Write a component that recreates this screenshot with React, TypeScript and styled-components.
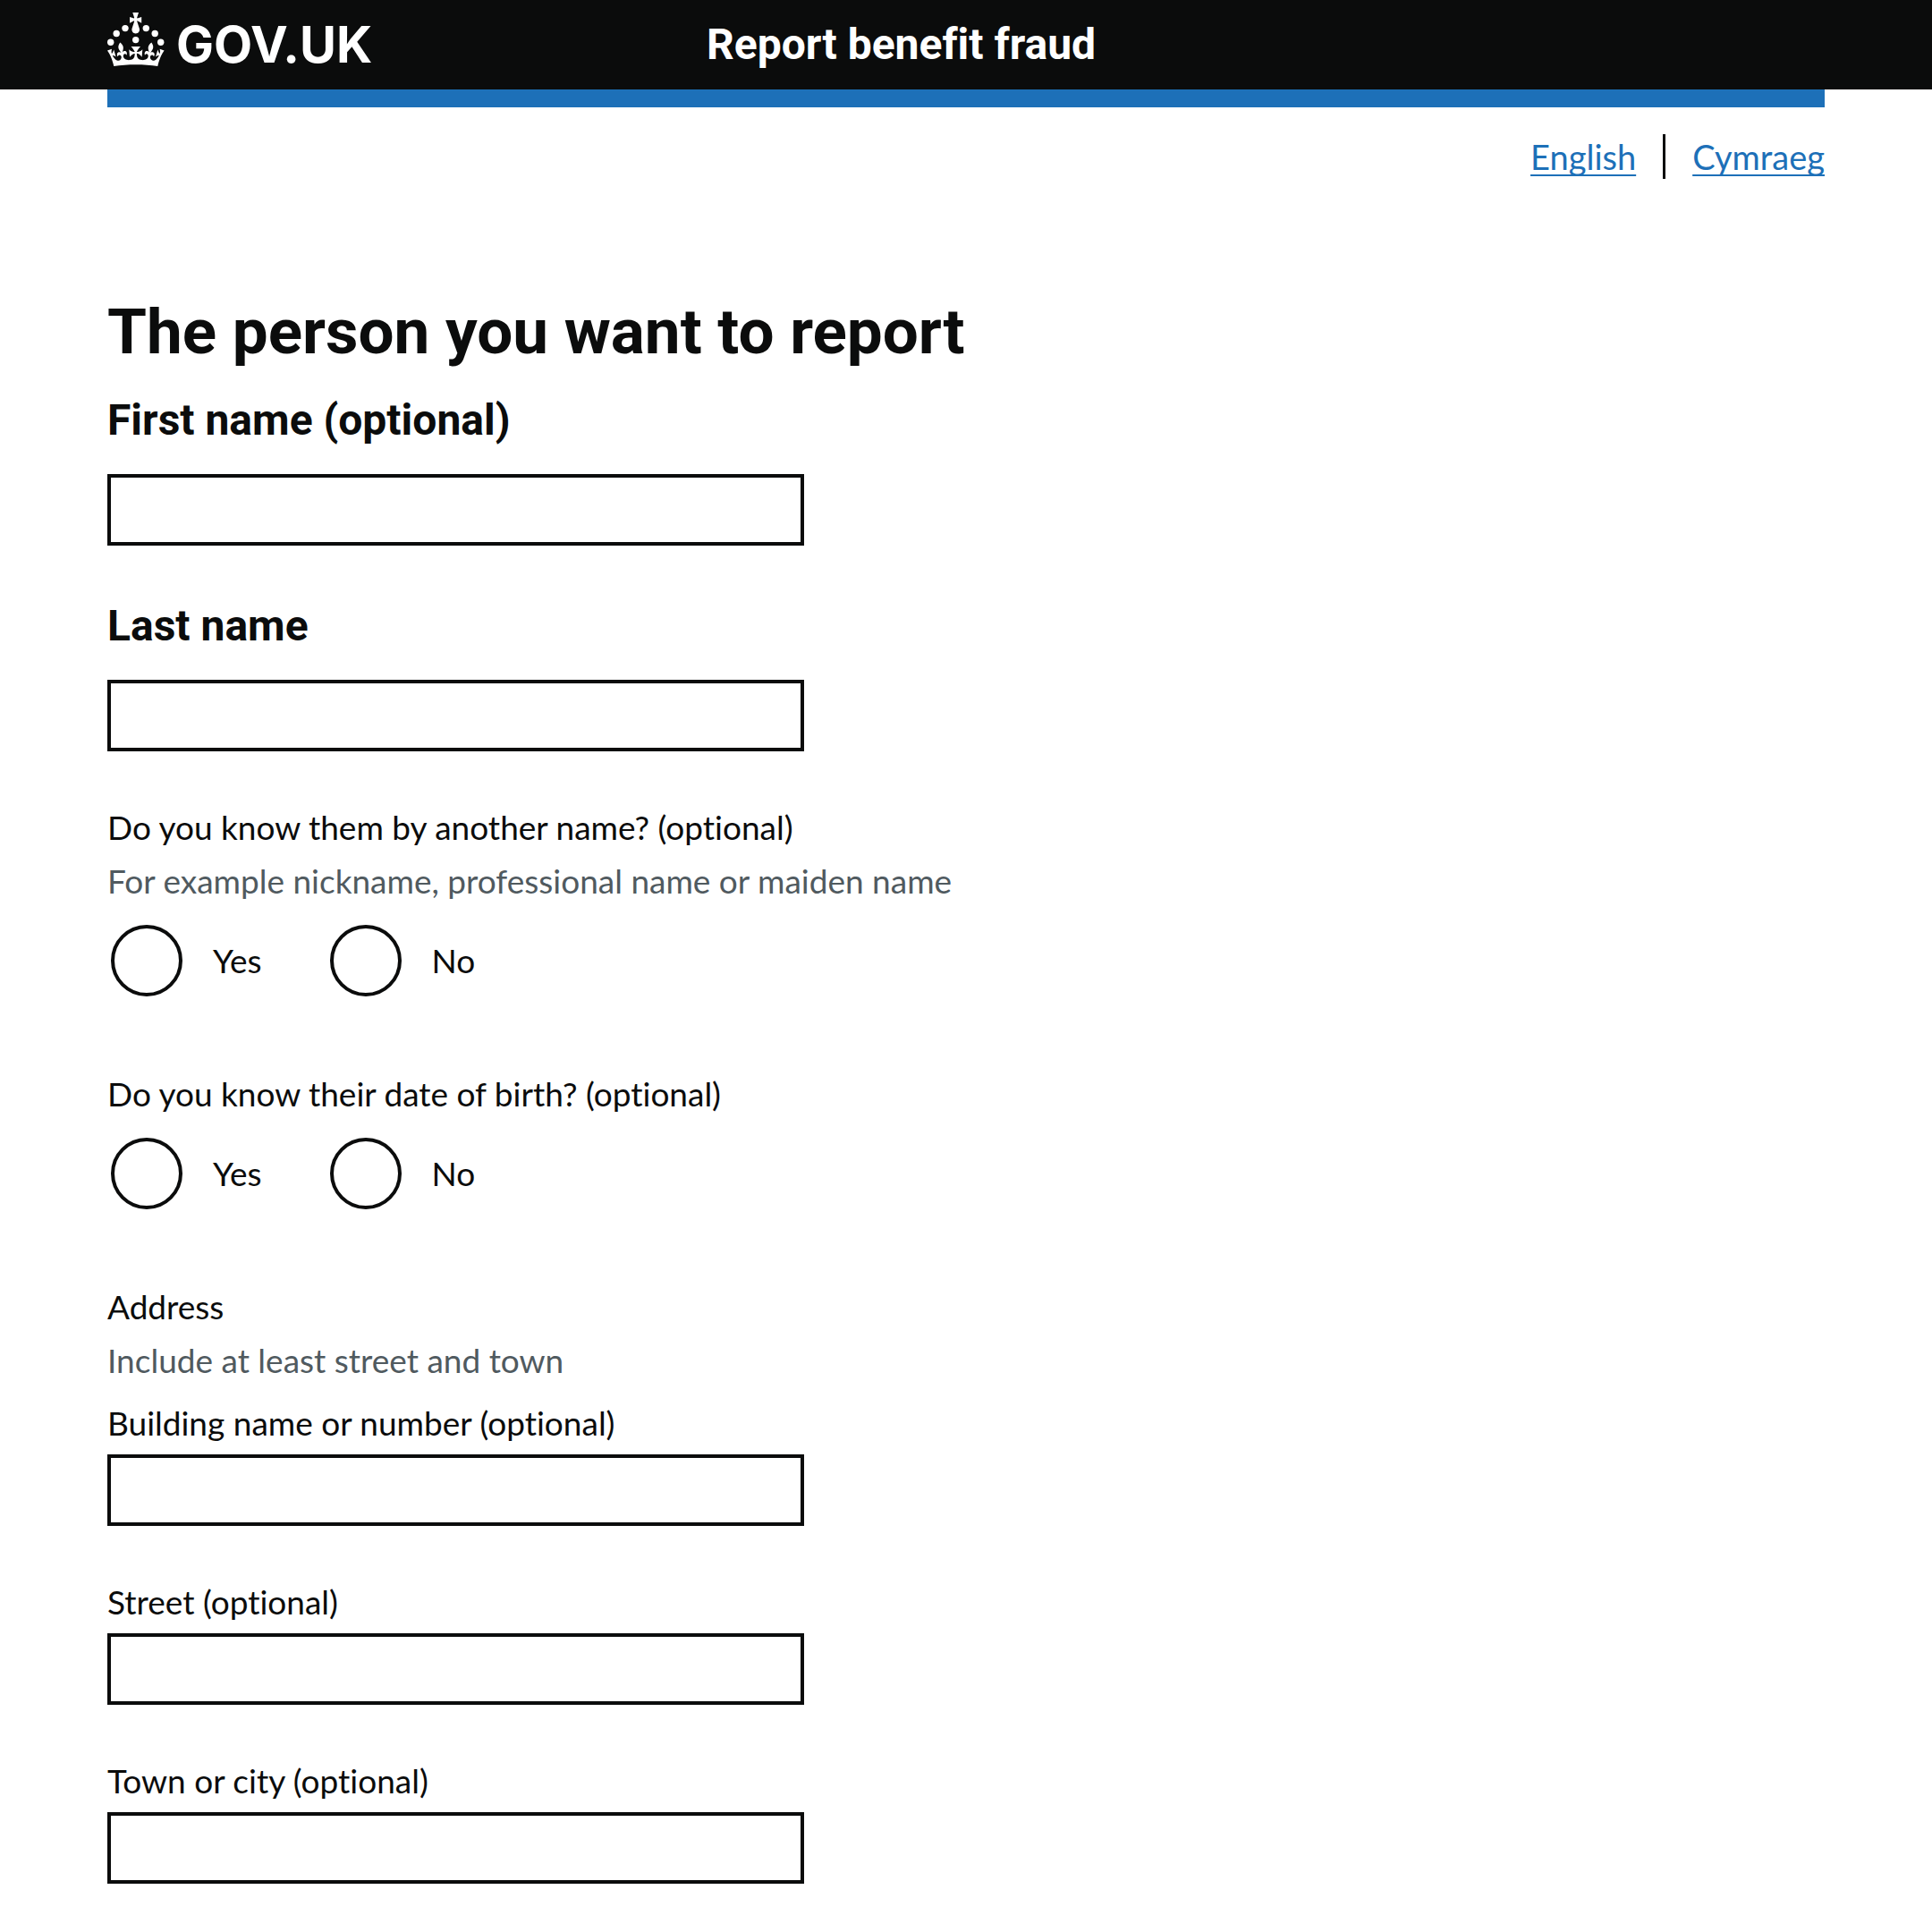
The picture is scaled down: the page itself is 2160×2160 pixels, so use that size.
import React, { useId } from 'react';
import styled, { createGlobalStyle } from 'styled-components';

const ink = '#0b0c0c';
const blue = '#1d70b8';
const grey = '#505a5f';
const body = `'Lato', 'Liberation Sans', sans-serif`;
const strong = `'Roboto', 'Liberation Sans', sans-serif`;

const GlobalStyle = createGlobalStyle`
  *, *::before, *::after {
    box-sizing: border-box;
    font-variant-ligatures: none;
  }
  body {
    margin: 0;
    background: #fff;
    color: ${ink};
    font: 400 37px/50px ${body};
  }
`;

const Container = styled.div`
  margin: 0 120px;
`;

const Header = styled.header`
  background: ${ink};
  color: #fff;
`;

const HeaderGrid = styled(Container)`
  display: grid;
  grid-template-columns: 1fr 2fr;
  height: 100px;
`;

const HomeLink = styled.a`
  display: flex;
  gap: 13px;
  padding-top: 14px;
  color: inherit;
  text-decoration: none;
  font: 700 56px/72px 'Inter', 'Liberation Sans', sans-serif;

  svg {
    flex: none;
    fill: currentColor;
  }
`;

const ServiceLink = styled.a`
  padding: 20px 0 0 30px;
  color: inherit;
  text-decoration: none;
  font: 700 48px/60px ${strong};
  font-variant-ligatures: none;
`;

const BlueBar = styled(Container)`
  height: 20px;
  background: ${blue};
`;

const Languages = styled.ul`
  display: flex;
  justify-content: flex-end;
  margin: 30px 0 0;
  padding: 0;
  list-style: none;
  font-size: 38px;
`;

const Language = styled.li`
  & + & {
    margin-left: 30px;
    padding-left: 30px;
    border-left: 3px solid ${ink};
  }
`;

const LanguageLink = styled.a`
  color: ${blue};
  text-decoration: underline 2px;
  text-decoration-skip-ink: none;
  text-underline-offset: 5px;
`;

const Main = styled.main`
  padding: 130px 0 60px;
`;

const Title = styled.h1`
  margin: 0 0 28px;
  font: 700 71px/82px ${strong};
`;

const Group = styled.div`
  margin-bottom: 60px;
`;

const Label = styled.label<{ $large?: boolean }>`
  display: block;
  width: fit-content;
  margin-bottom: ${p => (p.$large ? 30 : 10)}px;
  ${p => p.$large && `font: 700 48px/60px ${strong};`}
`;

const TextInput = styled.input`
  display: block;
  width: 100%;
  max-width: 779px;
  height: 80px;
  padding: 10px;
  border: 4px solid ${ink};
  border-radius: 0;
  background: #fff;
  color: inherit;
  font: inherit;
`;

const Fieldset = styled.fieldset`
  min-width: 0;
  margin: 0;
  padding: 0;
  border: 0;
`;

const Legend = styled.legend`
  margin-bottom: 10px;
  padding: 0;
`;

const Hint = styled.div`
  margin-bottom: 20px;
  color: ${grey};
`;

const Radios = styled.div<{ $afterHint: boolean }>`
  display: flex;
  gap: 40px;
  padding: ${p => (p.$afterHint ? 4 : 14)}px 0 84px;
`;

const RadioItem = styled.div`
  display: flex;
  align-items: center;
  padding-left: 4px;
`;

const RadioInput = styled.input`
  appearance: none;
  flex: none;
  width: 80px;
  height: 80px;
  margin: 0;
  border: 4px solid ${ink};
  border-radius: 50%;
  background: #fff;

  &:checked {
    background: radial-gradient(${ink} 20px, #fff 21px);
  }
`;

const RadioLabel = styled.label`
  padding: 0 32px 0 34px;
`;

function Crown() {
  return (
    <svg width="64" height="60" viewBox="0 0 64 60" aria-hidden="true">
      <circle cx="20" cy="17.6" r="3.7" />
      <circle cx="10.2" cy="23.5" r="3.7" />
      <circle cx="3.7" cy="33.2" r="3.7" />
      <circle cx="31.7" cy="30.6" r="3.7" />
      <circle cx="43.3" cy="17.6" r="3.7" />
      <circle cx="53.2" cy="23.5" r="3.7" />
      <circle cx="59.7" cy="33.2" r="3.7" />
      <path d="M33.1,9.8c.2-.1.3-.3.5-.5l4.6,2.4v-6.8l-4.6,1.5c-.1-.2-.3-.3-.5-.5l1.9-5.9h-6.7l1.9,5.9c-.2.1-.3.3-.5.5l-4.6-1.5v6.8l4.6-2.4c.1.2.3.3.5.5l-2.6,8c-.9,2.8,1.2,5.7,4.1,5.7h0c3,0,5.1-2.9,4.1-5.7l-2.6-8ZM37,37.9s-3.4,3.8-4.1,6.1c2.2,0,4.2-.5,6.4-2.8l-.7,8.5c-2-2.8-4.4-4.1-5.7-3.8.1,3.1.5,6.7,5.8,7.2,3.7.3,6.7-1.5,7-3.8.4-2.6-2-4.3-3.7-1.6-1.4-4.5,2.4-6.1,4.9-3.2-1.9-4.5-1.8-7.7,2.4-10.9,3,4,2.6,7.3-1.2,11.1,2.4-1.3,6.2,0,4,4.6-1.2-2.8-3.7-2.2-4.2.2-.3,1.7.7,3.7,3,4.2,1.9.3,4.7-.9,7-5.9-1.3,0-2.4.7-3.9,1.7l2.4-8c.6,2.3,1.4,3.7,2.2,4.5.6-1.6.5-2.8,0-5.3l5,1.8c-2.6,3.6-5.2,8.7-7.3,17.5-7.4-1.1-15.7-1.7-24.5-1.7h0c-8.8,0-17.1.6-24.5,1.7-2.1-8.9-4.7-13.9-7.3-17.5l5-1.8c-.5,2.5-.6,3.7,0,5.3.8-.8,1.6-2.3,2.2-4.5l2.4,8c-1.5-1-2.6-1.7-3.9-1.7,2.3,5,5.2,6.2,7,5.9,2.3-.4,3.3-2.4,3-4.2-.5-2.4-3-3.1-4.2-.2-2.2-4.6,1.6-6,4-4.6-3.7-3.7-4.2-7.1-1.2-11.1,4.2,3.2,4.3,6.4,2.4,10.9,2.5-2.8,6.3-1.3,4.9,3.2-1.8-2.7-4.1-1-3.7,1.6.3,2.3,3.3,4.1,7,3.8,5.4-.5,5.7-4.2,5.8-7.2-1.3-.2-3.7,1-5.7,3.8l-.7-8.5c2.2,2.3,4.2,2.7,6.4,2.8-.7-2.3-4.1-6.1-4.1-6.1h10.6,0Z" />
    </svg>
  );
}

function Field({ label, large }: { label: string; large?: boolean }) {
  const id = useId();
  return (
    <Group>
      <Label htmlFor={id} $large={large}>{label}</Label>
      <TextInput id={id} type="text" />
    </Group>
  );
}

function YesNo({ legend, hint }: { legend: string; hint?: string }) {
  const id = useId();
  return (
    <Fieldset aria-describedby={hint ? `${id}-hint` : undefined}>
      <Legend>{legend}</Legend>
      {hint && <Hint id={`${id}-hint`}>{hint}</Hint>}
      <Radios $afterHint={Boolean(hint)}>
        {['Yes', 'No'].map(option => (
          <RadioItem key={option}>
            <RadioInput type="radio" id={`${id}-${option}`} name={id} value={option} />
            <RadioLabel htmlFor={`${id}-${option}`}>{option}</RadioLabel>
          </RadioItem>
        ))}
      </Radios>
    </Fieldset>
  );
}

export default function App() {
  return (
    <>
      <GlobalStyle />
      <Header>
        <HeaderGrid>
          <HomeLink href="#"><Crown />GOV.UK</HomeLink>
          <ServiceLink href="#">Report benefit fraud</ServiceLink>
        </HeaderGrid>
      </Header>
      <BlueBar />
      <Container>
        <nav aria-label="Language">
          <Languages>
            <Language><LanguageLink href="#">English</LanguageLink></Language>
            <Language><LanguageLink href="#" lang="cy">Cymraeg</LanguageLink></Language>
          </Languages>
        </nav>
        <Main>
          <Title>The person you want to report</Title>
          <form>
            <Field label="First name (optional)" large />
            <Field label="Last name" large />
            <YesNo
              legend="Do you know them by another name? (optional)"
              hint="For example nickname, professional name or maiden name"
            />
            <YesNo legend="Do you know their date of birth? (optional)" />
            <Fieldset>
              <Legend>Address</Legend>
              <Hint>Include at least street and town</Hint>
              <Field label="Building name or number (optional)" />
              <Field label="Street (optional)" />
              <Field label="Town or city (optional)" />
            </Fieldset>
          </form>
        </Main>
      </Container>
    </>
  );
}
